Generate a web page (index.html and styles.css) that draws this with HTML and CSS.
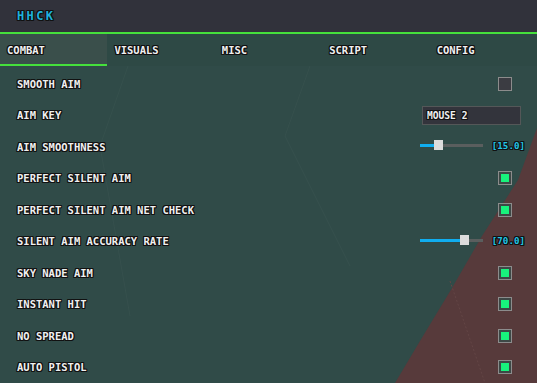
FILE: index.html
```html
<!DOCTYPE html>
<html lang="en">
<head>
    <meta charset="UTF-8">
    <meta name="viewport" content="width=device-width, initial-scale=1.0">
    <title>HHCK</title>
    <link rel="stylesheet" href="styles.css">
</head>
<body>
    <div class="menu">
        <div class="menu-header">
            <span class="menu-title">HHCK</span>
        </div>
        <nav class="tabs">
            <div class="tab active">COMBAT</div>
            <div class="tab">VISUALS</div>
            <div class="tab">MISC</div>
            <div class="tab">SCRIPT</div>
            <div class="tab">CONFIG</div>
        </nav>
        <div class="content">
            <svg class="backdrop" width="537" height="317" viewBox="0 0 537 317">
                <polygon points="537,62 537,317 395,317 420,275 452,222 482,170 518,114" fill="#573a3b"/>
                <line x1="128" y1="0" x2="100" y2="80" stroke="#36504d" stroke-width="1"/>
                <line x1="100" y1="80" x2="130" y2="250" stroke="#36504d" stroke-width="1"/>
                <line x1="310" y1="0" x2="285" y2="70" stroke="#36504d" stroke-width="1"/>
                <line x1="285" y1="70" x2="350" y2="200" stroke="#36504d" stroke-width="1"/>
                <line x1="450" y1="215" x2="485" y2="317" stroke="#634545" stroke-width="1" stroke-dasharray="2 2"/>
            </svg>

            <div class="row">
                <span class="label">SMOOTH AIM</span>
                <span class="checkbox"></span>
            </div>
            <div class="row">
                <span class="label">AIM KEY</span>
                <span class="keybox">MOUSE 2</span>
            </div>
            <div class="row">
                <span class="label">AIM SMOOTHNESS</span>
                <div class="slider">
                    <div class="track">
                        <div class="fill" style="width: 18px"></div>
                        <div class="knob" style="left: 14px"></div>
                    </div>
                    <span class="value">[15.0]</span>
                </div>
            </div>
            <div class="row">
                <span class="label">PERFECT SILENT AIM</span>
                <span class="checkbox checked"></span>
            </div>
            <div class="row">
                <span class="label">PERFECT SILENT AIM NET CHECK</span>
                <span class="checkbox checked"></span>
            </div>
            <div class="row">
                <span class="label">SILENT AIM ACCURACY RATE</span>
                <div class="slider">
                    <div class="track">
                        <div class="fill" style="width: 44px"></div>
                        <div class="knob" style="left: 40px"></div>
                    </div>
                    <span class="value">[70.0]</span>
                </div>
            </div>
            <div class="row">
                <span class="label">SKY NADE AIM</span>
                <span class="checkbox checked"></span>
            </div>
            <div class="row">
                <span class="label">INSTANT HIT</span>
                <span class="checkbox checked"></span>
            </div>
            <div class="row">
                <span class="label">NO SPREAD</span>
                <span class="checkbox checked"></span>
            </div>
            <div class="row">
                <span class="label">AUTO PISTOL</span>
                <span class="checkbox checked"></span>
            </div>
        </div>
    </div>
</body>
</html>
```

FILE: styles.css
```css
* {
    margin: 0;
    padding: 0;
    box-sizing: border-box;
}

body {
    width: 537px;
    height: 383px;
    overflow: hidden;
    background: #304b48;
    font-family: "DejaVu Sans Mono", "Liberation Mono", monospace;
    font-weight: bold;
    color: #f0f0f0;
}

.menu {
    display: flex;
    flex-direction: column;
    height: 383px;
}

.outlined,
.menu-title,
.tab,
.label,
.keybox,
.value {
    text-shadow: -1px -1px 0 #111, 0 -1px 0 #111, 1px -1px 0 #111, -1px 0 0 #111,
        1px 0 0 #111, -1px 1px 0 #111, 0 1px 0 #111, 1px 1px 0 #111;
}

.menu-header {
    height: 32px;
    background: #31323b;
    display: flex;
    align-items: center;
    padding-left: 17px;
    border-bottom: 2px solid #45e03c;
    box-sizing: content-box;
}

.menu-title {
    color: #1fb1dc;
    font-size: 12px;
    letter-spacing: 2.4px;
}

.tabs {
    display: flex;
    height: 32px;
    background: #2e4945;
}

.tab {
    flex: 1;
    display: flex;
    align-items: center;
    padding-left: 7px;
    padding-top: 1px;
    font-size: 10.5px;
    border-bottom: 2px solid transparent;
}

.tab.active {
    background: #3a4f4b;
    border-bottom-color: #45e03c;
}

.content {
    position: relative;
    flex: 1;
    padding-top: 2px;
    background: #304b48;
    overflow: hidden;
}

.backdrop {
    position: absolute;
    left: 0;
    top: 0;
}

.row {
    position: relative;
    height: 31.5px;
    display: flex;
    align-items: center;
    justify-content: space-between;
    padding-left: 17px;
    padding-right: 12px;
}

.label {
    font-size: 10.5px;
}

.checkbox {
    width: 14px;
    height: 14px;
    margin-right: 13px;
    border: 1px solid #8c8c8c;
    background: #3b3c42;
}

.checkbox.checked {
    padding: 2px;
    background: #3d4846;
}

.checkbox.checked::after {
    content: "";
    display: block;
    width: 100%;
    height: 100%;
    background: #18f27c;
}

.keybox {
    width: 99px;
    height: 19px;
    margin-right: 4px;
    padding-left: 4px;
    display: flex;
    align-items: center;
    background: #33343c;
    border: 1px solid #545758;
    font-size: 9.6px;
}

.slider {
    display: flex;
    align-items: center;
    gap: 9px;
    margin-top: -2px;
}

.track {
    position: relative;
    width: 63px;
    height: 3px;
    margin-left: 1px;
    background: #5a5e5e;
}

.fill {
    height: 3px;
    background: #10aef0;
}

.knob {
    position: absolute;
    top: -4px;
    width: 9px;
    height: 10px;
    background: #dcdcdc;
}

.value {
    color: #22c4e6;
    font-size: 9.2px;
}
```
